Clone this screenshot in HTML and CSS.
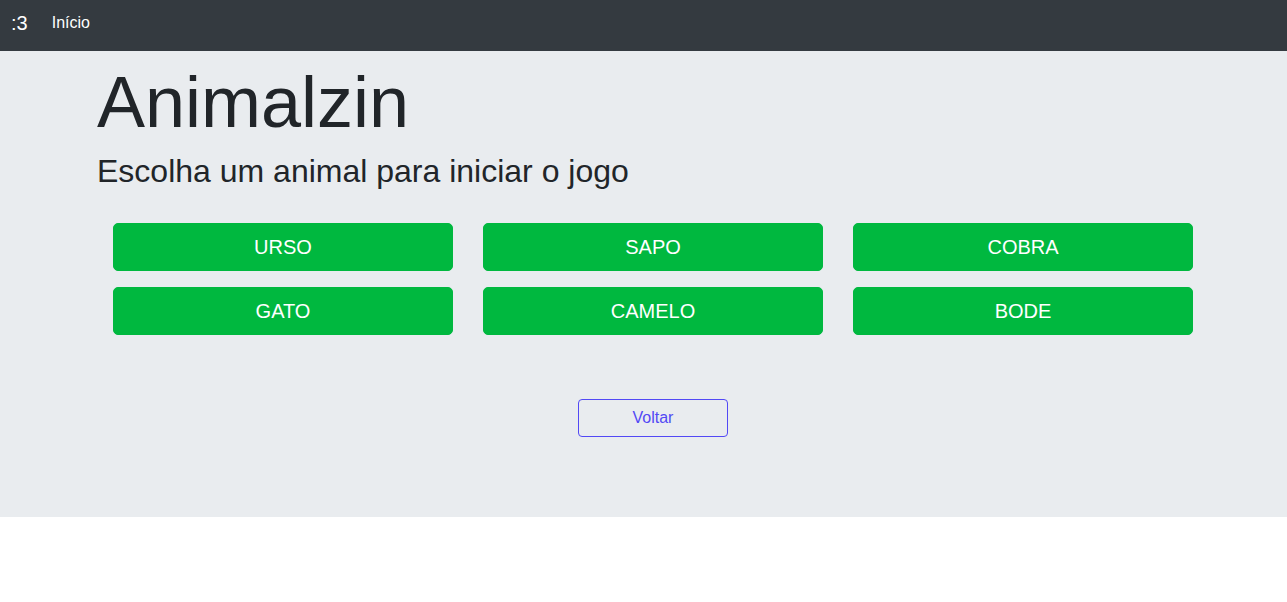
FILE: index.html
```html
<!DOCTYPE html>
<html lang="pt">
<head>
<meta charset="utf-8">
<title>Animalzin</title>
<link rel="stylesheet" href="styles.css">
</head>
<body>
<nav class="navbar">
  <a class="brand" href="#">:3</a>
  <a class="nav-link" href="#">Início</a>
</nav>
<main class="jumbotron">
  <div class="container">
    <h1 class="title">Animalzin</h1>
    <p class="subtitle">Escolha um animal para iniciar o jogo</p>
    <div class="choices">
      <div class="grid">
        <button class="btn-animal">URSO</button>
        <button class="btn-animal">SAPO</button>
        <button class="btn-animal">COBRA</button>
        <button class="btn-animal">GATO</button>
        <button class="btn-animal">CAMELO</button>
        <button class="btn-animal">BODE</button>
      </div>
      <div class="back-row">
        <button class="btn-back">Voltar</button>
      </div>
    </div>
  </div>
</main>
</body>
</html>
```
FILE: styles.css
```css
* { box-sizing: border-box; }
html, body { margin: 0; padding: 0; }
body {
  font-family: "Liberation Sans", Arial, sans-serif;
  color: #212529;
  background: #fff;
  font-size: 16px;
}
.navbar {
  height: 51px;
  background: #343a40;
  display: flex;
  align-items: center;
  padding: 0 11px 5px;
}
.brand {
  color: #fff;
  font-size: 20px;
  text-decoration: none;
  margin-right: 24px;
}
.nav-link {
  color: #fff;
  font-size: 16px;
  text-decoration: none;
}
.jumbotron {
  background: #e9ecef;
  height: 466px;
  padding-top: 59px;
}
.container {
  padding-left: 97px;
}
.title {
  margin: 0;
  font-size: 72px;
  font-weight: 300;
  line-height: 1.2;
  margin-top: -51px;
}
.subtitle {
  margin: 7px 0 0;
  font-size: 32px;
  line-height: 1.2;
}
.choices {
  width: 1112px;
  padding: 0 16px;
  margin-top: 32px;
}
.grid {
  display: grid;
  grid-template-columns: repeat(3, 340px);
  column-gap: 30px;
  row-gap: 16px;
}
.btn-animal {
  height: 48px;
  background: #00b83f;
  border: 1px solid #00b83f;
  border-radius: 5px;
  color: #fff;
  font-family: inherit;
  font-size: 20px;
  line-height: 1.5;
  cursor: pointer;
}
.back-row {
  display: flex;
  justify-content: center;
  margin-top: 64px;
}
.btn-back {
  width: 150px;
  height: 38px;
  background: transparent;
  border: 1px solid #5249f5;
  border-radius: 4px;
  color: #5249f5;
  font-family: inherit;
  font-size: 16px;
  cursor: pointer;
}
```
